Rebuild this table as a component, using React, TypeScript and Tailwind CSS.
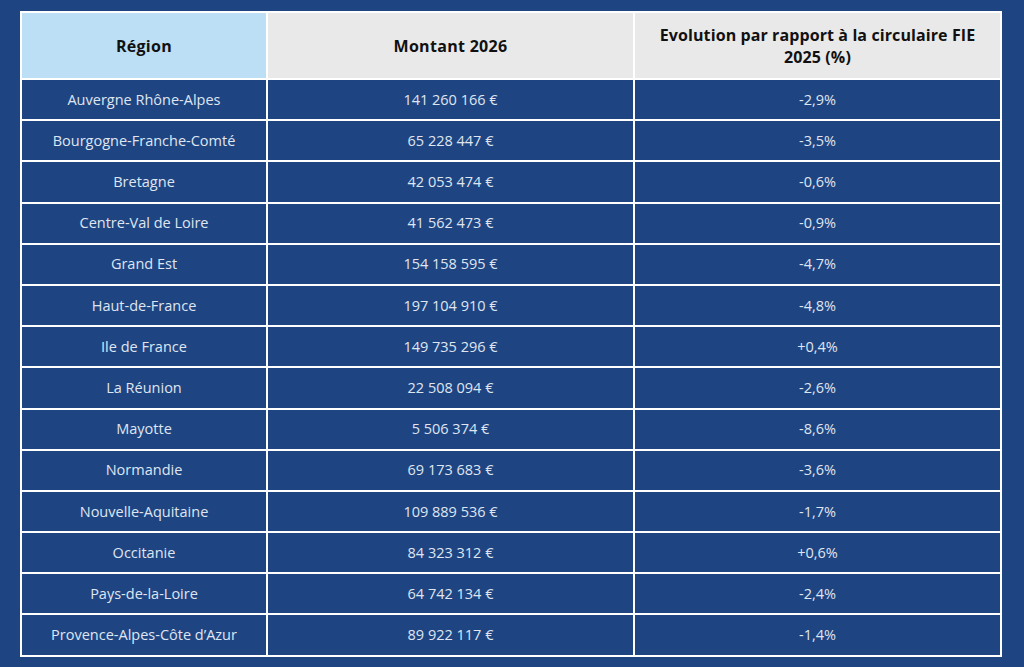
import React from "react";

const rows: [string, string, string][] = [
  ["Auvergne Rhône-Alpes", "141 260 166 €", "-2,9%"],
  ["Bourgogne-Franche-Comté", "65 228 447 €", "-3,5%"],
  ["Bretagne", "42 053 474 €", "-0,6%"],
  ["Centre-Val de Loire", "41 562 473 €", "-0,9%"],
  ["Grand Est", "154 158 595 €", "-4,7%"],
  ["Haut-de-France", "197 104 910 €", "-4,8%"],
  ["Ile de France", "149 735 296 €", "+0,4%"],
  ["La Réunion", "22 508 094 €", "-2,6%"],
  ["Mayotte", "5 506 374 €", "-8,6%"],
  ["Normandie", "69 173 683 €", "-3,6%"],
  ["Nouvelle-Aquitaine", "109 889 536 €", "-1,7%"],
  ["Occitanie", "84 323 312 €", "+0,6%"],
  ["Pays-de-la-Loire", "64 742 134 €", "-2,4%"],
  ["Provence-Alpes-Côte d’Azur", "89 922 117 €", "-1,4%"],
];

export default function App() {
  return (
    <div className="w-[1024px] h-[667px] bg-[#1f4482] pt-[11px] pl-[20px] font-['Open_Sans',sans-serif] overflow-hidden">
      <div className="w-[982px] grid grid-cols-[244px_365px_365px] gap-[2px] p-[2px] bg-white">
        <div className="h-[65px] bg-[#bcdff5] flex items-center justify-center text-[16px] tracking-[0.3px] font-bold text-[#111]">
          Région
        </div>
        <div className="h-[65px] bg-[#e9e9e9] flex items-center justify-center text-[16px] tracking-[0.3px] font-bold text-[#111]">
          Montant 2026
        </div>
        <div className="h-[65px] bg-[#e9e9e9] flex items-center justify-center text-center text-[16px] tracking-[0.1px] font-bold leading-[22px] text-[#111] px-4">
          Evolution par rapport à la circulaire FIE 2025 (%)
        </div>
        {rows.map(([region, amount, evo]) => (
          <React.Fragment key={region}>
            <div className="h-[39.2px] bg-[#1f4482] flex items-center justify-center text-[14.5px] text-[#dfe6f1]">
              {region}
            </div>
            <div className="h-[39.2px] bg-[#1f4482] flex items-center justify-center text-[14.5px] text-[#dfe6f1]">
              {amount}
            </div>
            <div className="h-[39.2px] bg-[#1f4482] flex items-center justify-center text-[14.5px] text-[#dfe6f1]">
              {evo}
            </div>
          </React.Fragment>
        ))}
      </div>
    </div>
  );
}
